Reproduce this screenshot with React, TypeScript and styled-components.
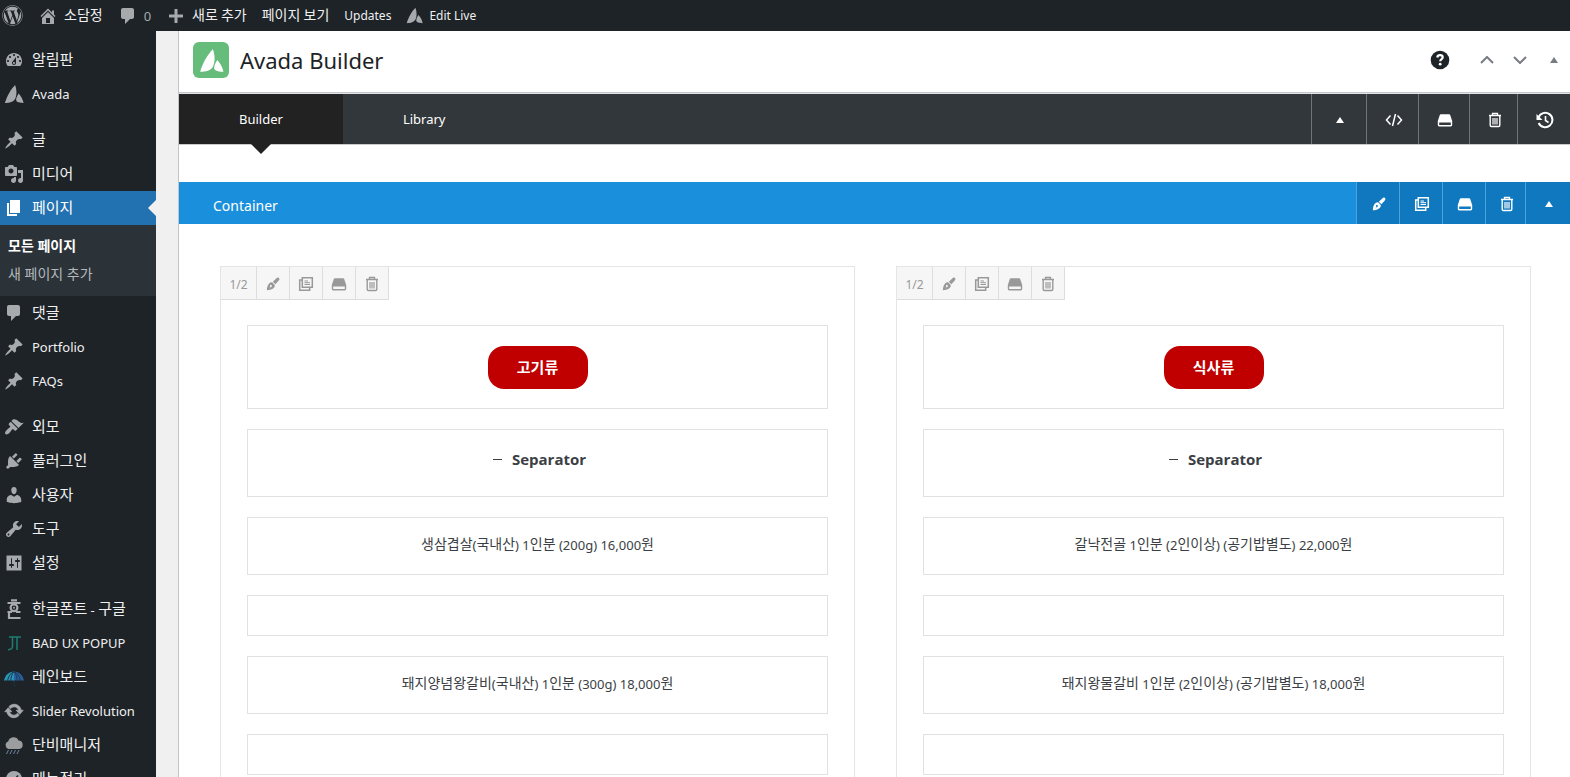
import React from "react";
import styled, { createGlobalStyle, css } from "styled-components";
import { FaWordpress } from "react-icons/fa";

const GlobalStyle = createGlobalStyle`
  *, *::before, *::after { box-sizing: border-box; }
  body {
    margin: 0;
    background: #f0f0f1;
    font-family: "Noto Sans", "Noto Sans CJK KR", sans-serif;
    font-size: 13px;
    color: #3c434a;
  }
  a { color: inherit; text-decoration: none; }
  button {
    margin: 0;
    padding: 0;
    border: 0;
    background: none;
    color: inherit;
    font: inherit;
    cursor: pointer;
  }
  ul { margin: 0; padding: 0; list-style: none; }
`;

/* ---------- Text ---------- */

const HangulRun = styled.span<{ $size: number }>`
  font-family: "Noto Sans CJK KR", sans-serif;
  font-size: ${(p) => p.$size}px;
  line-height: 1;
  vertical-align: 1px;
`;

/* Hangul is set slightly larger than the Latin text around it. */
function Mixed({ text, hangul }: { text: string; hangul: number }) {
  return (
    <span>
      {text.split(/([\uAC00-\uD7A3]+)/).map((run, i) =>
        i % 2 ? (
          <HangulRun key={i} $size={hangul}>
            {run}
          </HangulRun>
        ) : (
          run
        ),
      )}
    </span>
  );
}

/* ---------- Icons ---------- */

const dash = {
  home: "M16 8.5l1.53 1.53-1.06 1.06L10 4.6l-6.47 6.49-1.06-1.06L10 2.5l4 4v-2h2v4zm-6-2.46l6 5.99V18H4v-5.97zM12 17v-5H8v5h4z",
  comments: "M5 2h9c1.1 0 2 .9 2 2v7c0 1.1-.9 2-2 2h-2l-5 5v-5H5c-1.1 0-2-.9-2-2V4c0-1.1.9-2 2-2z",
  plus: "M17 8.5v3h-5.5V17h-3v-5.500H3v-3h5.500V3h3v5.500z",
  dashboard:
    "M3.76 16h12.48c1.1-1.37 1.76-3.11 1.76-5 0-4.42-3.58-8-8-8s-8 3.58-8 8c0 1.89.66 3.63 1.76 5zM10 4c.55 0 1 .45 1 1s-.45 1-1 1-1-.45-1-1 .45-1 1-1zM6 6c.55 0 1 .45 1 1s-.45 1-1 1-1-.45-1-1 .45-1 1-1zm8 0c.55 0 1 .45 1 1s-.45 1-1 1-1-.45-1-1 .45-1 1-1zm-5.37 5.55L12 7v6c0 1.1-.9 2-2 2s-2-.9-2-2c0-.57.24-1.08.63-1.45zM4 10c.55 0 1 .45 1 1s-.45 1-1 1-1-.45-1-1 .45-1 1-1zm12 0c.55 0 1 .45 1 1s-.45 1-1 1-1-.45-1-1 .45-1 1-1zm-5 3c0-.55-.45-1-1-1s-1 .45-1 1 .45 1 1 1 1-.45 1-1z",
  avada:
    "M11.100 1C7 5 3 12 .9 19c4.600 0 8.600-1 10.400-4.500C12.800 11.500 13 6 11.100 1zM14.600 9.500C13.800 11 12.300 13 12.100 15.500c0 2 1.500 3.200 7.500 3.500C18.800 15.200 17 12 14.600 9.500z",
  pin: "M10.44 3.02l1.82-1.82 6.36 6.35-1.83 1.82c-1.05-.68-2.48-.57-3.41.36l-.75.75c-.92.93-1.04 2.35-.35 3.41l-1.83 1.82-2.41-2.41-2.8 2.79c-.42.42-3.38 2.71-3.8 2.29s1.86-3.39 2.28-3.81l2.79-2.79L4.1 9.36l1.83-1.82c1.05.69 2.48.57 3.4-.36l.75-.75c.93-.92 1.05-2.35.36-3.41z",
  media:
    "M13 11V4c0-.55-.45-1-1-1h-1.67L9 1H5L3.67 3H2c-.55 0-1 .45-1 1v7c0 .55.45 1 1 1h10c.55 0 1-.45 1-1zM7 4.5c1.38 0 2.5 1.12 2.5 2.5S8.38 9.5 7 9.5 4.5 8.38 4.5 7 5.62 4.5 7 4.5zM14 6h5v10.5c0 1.38-1.12 2.5-2.5 2.5S14 17.88 14 16.5s1.12-2.5 2.5-2.5c.17 0 .34.02.5.05V9h-3V6zm-4 8.05V13h2v3.5c0 1.38-1.12 2.5-2.5 2.5S7 17.88 7 16.5 8.12 14 9.5 14c.17 0 .34.02.5.05z",
  page: "M6 15V2h10v13H6zm-1 1h8v2H3V5h2v11z",
  brush:
    "M14.48 11.06L7.41 3.99l1.5-1.5c.5-.56 2.3-.47 3.51.32 1.21.8 1.43 1.28 2.91 2.1 1.18.64 2.45 1.26 4.45.85zm-.71.71L6.7 4.7 4.93 6.47c-.39.39-.39 1.02 0 1.41l1.06 1.06c.39.39.39 1.03 0 1.42-.6.6-1.43 1.11-2.21 1.69-.35.26-.7.53-1.01.84C1.43 14.23.4 16.08 1.4 17.07c.99 1 2.84-.03 4.18-1.36.31-.31.58-.66.85-1.02.57-.78 1.08-1.61 1.69-2.21.39-.39 1.02-.39 1.41 0l1.06 1.06c.39.39 1.02.39 1.41 0z",
  plug: "M13.11 4.36L9.87 7.6 8 5.73l3.24-3.24c.35-.34 1.05-.2 1.56.32.52.51.66 1.21.31 1.55zm-8 1.77l.91-1.12 9.01 9.01-1.19.84c-.71.71-2.63 1.16-3.82 1.16H6.14L4.9 17.26c-.59.59-1.54.59-2.12 0-.59-.58-.59-1.53 0-2.12l1.24-1.24v-3.88c0-1.13.4-3.19 1.09-3.89zm7.26 3.97l3.24-3.24c.34-.35 1.04-.21 1.55.31.52.51.66 1.21.31 1.55l-3.24 3.25z",
  user: "M10 9.25c-2.27 0-2.73-3.44-2.73-3.44C7 4.02 7.82 2 9.97 2c2.16 0 2.98 2.02 2.71 3.81 0 0-.41 3.44-2.68 3.44zm0 2.57L12.72 10c2.39 0 4.52 2.33 4.52 4.53v2.49s-3.65 1.13-7.24 1.13c-3.65 0-7.24-1.13-7.24-1.13v-2.49c0-2.25 1.94-4.48 4.47-4.48z",
  wrench:
    "M16.68 9.77c-1.34 1.34-3.3 1.67-4.95.99l-5.41 6.52c-.99.99-2.59.99-3.58 0s-.99-2.59 0-3.57l6.52-5.42c-.68-1.65-.35-3.61.99-4.95 1.28-1.28 3.12-1.62 4.72-1.06l-2.89 2.89 2.82 2.82 2.86-2.87c.53 1.58.18 3.39-1.08 4.65zM3.81 16.21c.4.39 1.04.39 1.43 0 .4-.4.4-1.04 0-1.43-.39-.4-1.03-.4-1.43 0-.39.39-.39 1.03 0 1.43z",
  settings:
    "M17.500 2.500v15h-15v-15zM8 11h1c.55 0 1 .45 1 1s-.45 1-1 1H8v1.500c0 .28-.22.5-.5.5s-.5-.22-.5-.5V13H6c-.55 0-1-.45-1-1s.45-1 1-1h1V5.500c0-.28.22-.5.5-.5s.5.22.5.5V11zm5-2h-1c-.55 0-1-.45-1-1s.45-1 1-1h1V5.500c0-.28.22-.5.5-.5s.5.22.5.5V7h1c.55 0 1 .45 1 1s-.45 1-1 1h-1v5.500c0 .28-.22.5-.5.5s-.5-.22-.5-.5V9z",
  update:
    "M10.2 3.28c3.53 0 6.43 2.61 6.92 6h2.08l-3.5 4-3.5-4h2.32c-.45-1.97-2.21-3.45-4.32-3.45-1.45 0-2.73.71-3.54 1.78L4.95 5.66C6.23 4.2 8.11 3.28 10.2 3.28zm-.4 13.44c-3.52 0-6.43-2.61-6.92-6H.8l3.5-4c1.170 1.33 2.33 2.670 3.5 4H5.48c.45 1.970 2.210 3.450 4.320 3.450 1.450 0 2.730-.71 3.540-1.780l1.710 1.950c-1.280 1.460-3.150 2.380-5.250 2.380z",
};

function Dash({ name, size = 20, bold }: { name: keyof typeof dash; size?: number; bold?: boolean }) {
  return (
    <svg
      width={size}
      height={size}
      viewBox="0 0 20 20"
      fill="currentColor"
      fillRule="evenodd"
      stroke={bold ? "currentColor" : "none"}
      strokeWidth="0.800"
      aria-hidden="true"
    >
      <path d={dash[name]} />
    </svg>
  );
}

const HangulFontIcon = () => (
  <svg width="20" height="20" viewBox="0 0 20 20" fill="none" stroke="currentColor" strokeWidth="2.200" aria-hidden="true">
    <path d="M7 1.300h6M3.500 4h13" />
    <circle cx="10" cy="8.800" r="3.400" />
    <circle cx="10" cy="8.800" r="1" fill="currentColor" stroke="none" />
    <path d="M3.500 13h4.500M12 13h4.500M5 13v6h11.500" />
  </svg>
);

const JtIcon = () => (
  <svg width="20" height="20" viewBox="0 0 20 20" fill="none" stroke="#1c7f72" strokeWidth="1.500" aria-hidden="true">
    <path d="M5 4h12M8.500 4v9.500c0 2-1.500 3-4.500 3.200M13 4v13" />
  </svg>
);

const UmbrellaIcon = () => (
  <svg width="20" height="20" viewBox="0 0 20 20" aria-hidden="true">
    <path d="M0 14C1 8 5 4.500 10 4.500V14c-1-1-2.200-1-3.200 0-1-1-2.300-1-3.300 0-1-1-2.500-1-3.500 0z" fill="#2b93b4" />
    <path d="M10 4.500c5 0 9 3.500 10 9.500-1-1-2.500-1-3.500 0-1-1-2.300-1-3.300 0-1-1-2.200-1-3.200 0z" fill="#2a5f9e" />
    <path d="M3.500 14c.5-4 3-8 6.500-9.500C8 7 6.800 10 6.800 14M16.500 14c-.5-4-3-8-6.500-9.500 2 2.500 3.200 5.500 3.200 9.500" fill="none" stroke="#1a3b52" />
    <path d="M10 14v4c0 1.500 2 1.500 2 0" fill="none" stroke="#20313f" />
  </svg>
);

const RainIcon = () => (
  <svg width="20" height="20" viewBox="0 0 20 20" aria-hidden="true">
    <path d="M4.500 14a4 4 0 0 1-.3-7.600A5.500 5.500 0 0 1 14.500 5.500a4.300 4.300 0 0 1 .8 8.500z" fill="#9b9d9e" />
    <path d="M4.500 15l-2 4M8 15l-2 4M11.500 15l-2 4M15 15l-2 4" stroke="#6f86a3" />
  </svg>
);

const RoundIcon = () => (
  <svg width="20" height="20" viewBox="0 0 20 20" aria-hidden="true">
    <circle cx="10" cy="10" r="8" fill="#a7aaad" />
    <path d="M10 11l4-4.500" stroke="#1d2327" strokeWidth="1.500" />
  </svg>
);

const PenIcon = () => (
  <svg width="14" height="14" viewBox="0 0 16 16" fill="currentColor" fillRule="evenodd" aria-hidden="true">
    <path d="M14.800 1.200c1 1 .6 2-.4 3.100L10.700 8.200 7.800 5.300l3.900-3.700c1-1 2.100-1.400 3.100-.4zM7 6l3 3c.5 3-2.700 6-9 6 .2-6 3-9.400 6-9zm-.8 3.300a1 1 0 1 0-1 1.700L3.300 13.300l2.400-1.900a1.100 1.100 0 0 0 .5-2.100z" />
  </svg>
);

const CloneIcon = () => (
  <svg width="16" height="16" viewBox="0 0 16 16" fill="none" stroke="currentColor" aria-hidden="true">
    <path d="M4.300 1.700h10v9.600h-10z" strokeWidth="1.500" />
    <path d="M4 4H1.700v10.300h10V12" strokeWidth="1.500" />
    <path d="M6.500 5h3.500M6.500 6.700h5.500M6.500 8.500h5.500" />
  </svg>
);

const DriveIcon = () => (
  <svg width="16" height="16" viewBox="0 0 16 16" aria-hidden="true">
    <path d="M3.800 2.200h8.400c.5 0 .8.200 1 .7l2 6H.8l2-6c.2-.5.500-.7 1-.7z" fill="currentColor" />
    <path d="M1.500 9.800h13v3.200c0 .4-.3.700-.7.700H2.200c-.4 0-.7-.3-.7-.7z" fill="none" stroke="currentColor" strokeWidth="1.400" />
  </svg>
);

const TrashIcon = () => (
  <svg width="16" height="16" viewBox="0 0 16 16" fill="none" stroke="currentColor" aria-hidden="true">
    <path d="M2 3.500h12M5.500 3V1.500h5V3" strokeWidth="1.300" />
    <path d="M3.200 3.500v9.800c0 .7.500 1.200 1.200 1.200h7.200c.7 0 1.200-.5 1.200-1.200V3.500" strokeWidth="1.400" />
    <path d="M6 6v6.500M8 6v6.500M10 6v6.500" strokeWidth="1.200" />
  </svg>
);

const CodeIcon = () => (
  <svg width="18" height="16" viewBox="0 0 18 16" fill="none" stroke="currentColor" strokeWidth="1.500" aria-hidden="true">
    <path d="M5.500 3.500L1.500 8l4 4.500M12.500 3.500l4 4.500-4 4.500M10.500 2l-3 12" />
  </svg>
);

const HistoryIcon = () => (
  <svg width="18" height="18" viewBox="0 0 18 18" fill="none" stroke="currentColor" strokeWidth="2" aria-hidden="true">
    <path d="M2.500 6.500a7.200 7.200 0 1 1 .2 5.500" />
    <path d="M.5 3v6h6z" fill="currentColor" stroke="none" />
    <path d="M9.500 5v4.500l3 2" strokeWidth="1.600" />
  </svg>
);

const UpTriangle = () => (
  <svg width="8" height="8" viewBox="0 0 8 8" fill="currentColor" aria-hidden="true">
    <path d="M4 1l4 6H0z" />
  </svg>
);

const Chevron = ({ up }: { up?: boolean }) => (
  <svg width="14" height="8" viewBox="0 0 14 8" fill="none" stroke="currentColor" strokeWidth="2" aria-hidden="true">
    <path d={up ? "M1 7l6-6 6 6" : "M1 1l6 6 6-6"} />
  </svg>
);

const HelpIcon = () => (
  <svg width="20" height="20" viewBox="0 0 20 20" aria-hidden="true">
    <circle cx="10" cy="10" r="9.300" fill="#1d2327" />
    <path d="M7.300 7.500c.2-1.500 1.200-2.300 2.700-2.300s2.700.9 2.700 2.200c0 1.700-2.500 1.800-2.500 3.900" fill="none" stroke="#fff" strokeWidth="2.200" />
    <circle cx="10.200" cy="14.200" r="1.400" fill="#fff" />
  </svg>
);

/* ---------- Frame ---------- */

const Page = styled.div`
  display: flex;
  flex-direction: column;
  height: 100vh;
`;

const AdminBar = styled.header`
  flex: none;
  display: flex;
  align-items: center;
  gap: 15px;
  height: 31px;
  padding-left: 2px;
  background: #1d2327;
  color: #f0f0f1;
  font-size: 12px;
`;

const BarLink = styled.a<{ $muted?: boolean }>`
  display: flex;
  align-items: center;
  gap: 6px;
  height: 30px;
  white-space: nowrap;
  ${(p) =>
    p.$muted &&
    css`
      color: #a7aaad;
      font-size: 13px;
    `}
  svg { color: #a7aaad; }
`;

const Body = styled.div`
  flex: 1;
  min-height: 0;
  display: flex;
`;

const Sidebar = styled.nav`
  flex: none;
  width: 156px;
  padding-top: 12px;
  overflow-y: auto;
  scrollbar-width: none;
  background: #1d2327;
  color: #f0f0f1;
`;

const MenuItem = styled.li<{ $first?: boolean }>`
  margin-top: ${(p) => (p.$first ? 12 : 0)}px;
`;

const MenuLink = styled.a<{ $active?: boolean }>`
  position: relative;
  display: flex;
  align-items: center;
  gap: 8px;
  height: 34px;
  padding-left: 4px;
  white-space: nowrap;
  svg { flex: none; color: ${(p) => (p.$active ? "#fff" : "#a7aaad")}; }
  ${(p) =>
    p.$active &&
    css`
      background: #2271b1;
      color: #fff;
      &::after {
        content: "";
        position: absolute;
        right: 0;
        top: 9px;
        border: 8px solid transparent;
        border-left-width: 0;
        border-right-color: #f0f0f1;
      }
    `}
`;

const SubMenu = styled.ul`
  padding: 7px 0 8px;
  background: #2c3338;
`;

const SubLink = styled.a<{ $current?: boolean }>`
  display: block;
  padding-left: 8px;
  font-size: 14px;
  line-height: 28px;
  color: ${(p) => (p.$current ? "#fff" : "#b4b9be")};
  font-weight: ${(p) => (p.$current ? 700 : 400)};
`;

const Panel = styled.main`
  flex: 1;
  min-width: 0;
  margin-left: 22px;
  border-left: 1px solid #c3c4c7;
  background: #fff;
  overflow-y: auto;
  scrollbar-width: none;
`;

/* ---------- Builder ---------- */

const PanelHeader = styled.header`
  display: flex;
  align-items: center;
  gap: 11px;
  height: 62px;
  padding: 0 12px 3px 14px;
  border-bottom: 1px solid #c3c4c7;
  color: #1d2327;
`;

const Logo = styled.span`
  display: grid;
  place-items: center;
  width: 36px;
  height: 36px;
  border-radius: 6px;
  background: #65bc7b;
  color: #fff;
`;

const Title = styled.h1`
  flex: 1;
  margin: 0;
  font-size: 22px;
  line-height: 30px;
  font-weight: 400;
`;

const HeaderActions = styled.div`
  display: flex;
  align-items: center;
  gap: 19px;
  color: #787c82;
  button { display: flex; }
  button:first-child { margin-right: 11px; }
  button:last-child { margin-left: 4px; }
`;

const TabBar = styled.div`
  display: flex;
  height: 52px;
  border-top: 1px solid #e2e4e7;
  border-bottom: 1px solid #c8cacc;
  background: #32373c;
  color: #fff;
`;

const Tabs = styled.div`
  flex: 1;
  display: flex;
`;

const Tab = styled.button<{ $active?: boolean }>`
  position: relative;
  padding: 0 60px;
  font-size: 13px;
  ${(p) =>
    p.$active &&
    css`
      background: #222;
      &::after {
        content: "";
        position: absolute;
        left: 50%;
        top: 100%;
        margin-left: -10px;
        border: 10px solid transparent;
        border-bottom-width: 0;
        border-top-color: #222;
      }
    `}
`;

const Tool = styled.button<{ $width: number; $line: string; $bg?: string }>`
  display: flex;
  align-items: center;
  justify-content: center;
  width: ${(p) => p.$width}px;
  padding: 2px 0 0 2px;
  border-left: 1px solid ${(p) => p.$line};
  background: ${(p) => p.$bg ?? "transparent"};
`;

const ContainerBar = styled.div`
  display: flex;
  height: 42px;
  margin-top: 37px;
  background: #1a8fdb;
  color: #fff;
`;

const ContainerName = styled.h2`
  flex: 1;
  margin: 0;
  padding: 4px 34px 0;
  font-size: 14px;
  line-height: 40px;
  font-weight: 400;
`;

const Columns = styled.div`
  display: flex;
  gap: 41px;
  padding: 42px 39px 42px 41px;
`;

const Column = styled.section`
  flex: 1;
  min-width: 0;
  border: 1px solid #e5e5e5;
`;

const ColumnTools = styled.div`
  display: flex;
  height: 33px;
  color: #999;
`;

const ColumnTool = styled.button<{ $wide?: boolean }>`
  display: flex;
  align-items: center;
  justify-content: center;
  width: ${(p) => (p.$wide ? 36 : 33)}px;
  padding-top: 2px;
  border: solid #ddd;
  border-width: 0 1px 1px 0;
  background: #f6f6f6;
  font-size: 12px;
`;

const Elements = styled.div`
  display: flex;
  flex-direction: column;
  gap: 20px;
  padding: 25px 26px;
`;

const Element = styled.div<{ $height: number }>`
  display: flex;
  align-items: center;
  justify-content: center;
  min-height: ${(p) => p.$height}px;
  border: 1px solid #e0e1e2;
  color: #3b3f45;
`;

const TextPreview = styled.div`
  padding-bottom: 2px;
`;

const PreviewButton = styled.a`
  min-width: 100px;
  padding: 0 24px;
  border-radius: 16px;
  background: #c00000;
  color: #fff;
  font-size: 15px;
  font-weight: 700;
  line-height: 43px;
  text-align: center;
`;

const SeparatorLabel = styled.h3`
  display: flex;
  align-items: center;
  gap: 10px;
  margin: 0;
  padding: 0 0 8px 4px;
  font-family: "Open Sans", sans-serif;
  font-size: 15px;
  line-height: 20px;
  font-weight: 700;
  &::before {
    content: "";
    width: 9px;
    height: 1px;
    background: #3b3f45;
  }
`;

/* ---------- Data ---------- */

type Item = { label: string; icon: React.ReactNode; first?: boolean; active?: boolean; sub?: string[] };

const menu: Item[] = [
  { label: "알림판", icon: <Dash name="dashboard" /> },
  { label: "Avada", icon: <Dash name="avada" /> },
  { label: "글", icon: <Dash name="pin" />, first: true },
  { label: "미디어", icon: <Dash name="media" /> },
  { label: "페이지", icon: <Dash name="page" />, active: true, sub: ["모든 페이지", "새 페이지 추가"] },
  { label: "댓글", icon: <Dash name="comments" /> },
  { label: "Portfolio", icon: <Dash name="pin" /> },
  { label: "FAQs", icon: <Dash name="pin" /> },
  { label: "외모", icon: <Dash name="brush" />, first: true },
  { label: "플러그인", icon: <Dash name="plug" /> },
  { label: "사용자", icon: <Dash name="user" /> },
  { label: "도구", icon: <Dash name="wrench" /> },
  { label: "설정", icon: <Dash name="settings" /> },
  { label: "한글폰트 - 구글", icon: <HangulFontIcon />, first: true },
  { label: "BAD UX POPUP", icon: <JtIcon /> },
  { label: "레인보드", icon: <UmbrellaIcon /> },
  { label: "Slider Revolution", icon: <Dash name="update" bold /> },
  { label: "단비매니저", icon: <RainIcon /> },
  { label: "메뉴정리", icon: <RoundIcon /> },
];

const columns = [
  { name: "고기류", rows: ["생삼겹살(국내산) 1인분 (200g) 16,000원", "돼지양념왕갈비(국내산) 1인분 (300g) 18,000원"] },
  { name: "식사류", rows: ["갈낙전골 1인분 (2인이상) (공기밥별도) 22,000원", "돼지왕물갈비 1인분 (2인이상) (공기밥별도) 18,000원"] },
];

const tabTools = [
  { label: "Toggle all", icon: <UpTriangle />, width: 55 },
  { label: "Custom CSS", icon: <CodeIcon />, width: 52 },
  { label: "Save page", icon: <DriveIcon />, width: 51 },
  { label: "Delete all", icon: <TrashIcon />, width: 48 },
  { label: "History", icon: <HistoryIcon />, width: 53 },
];

const containerTools = [
  { label: "Edit container", icon: <PenIcon />, width: 43 },
  { label: "Clone container", icon: <CloneIcon />, width: 43 },
  { label: "Save container", icon: <DriveIcon />, width: 43 },
  { label: "Delete container", icon: <TrashIcon />, width: 40 },
  { label: "Toggle container", icon: <UpTriangle />, width: 45 },
];

const columnTools = [
  { label: "Edit column", icon: <PenIcon /> },
  { label: "Clone column", icon: <CloneIcon /> },
  { label: "Save column", icon: <DriveIcon /> },
  { label: "Delete column", icon: <TrashIcon /> },
];

export default function App() {
  return (
    <Page>
      <GlobalStyle />
      <AdminBar>
        <BarLink href="#" aria-label="WordPress">
          <FaWordpress size={21} />
        </BarLink>
        <BarLink href="#">
          <Dash name="home" />
          <Mixed text="소담정" hangul={14} />
        </BarLink>
        <BarLink href="#" $muted>
          <Dash name="comments" />
          <span>0</span>
        </BarLink>
        <BarLink href="#">
          <Dash name="plus" />
          <Mixed text="새로 추가" hangul={14} />
        </BarLink>
        <BarLink href="#">
          <Mixed text="페이지 보기" hangul={14} />
        </BarLink>
        <BarLink href="#">Updates</BarLink>
        <BarLink href="#">
          <Dash name="avada" size={17} />
          <span>Edit Live</span>
        </BarLink>
      </AdminBar>
      <Body>
        <Sidebar>
          <ul>
            {menu.map((item) => (
              <MenuItem key={item.label} $first={item.first}>
                <MenuLink href="#" $active={item.active}>
                  {item.icon}
                  <Mixed text={item.label} hangul={15} />
                </MenuLink>
                {item.sub && (
                  <SubMenu>
                    {item.sub.map((s, i) => (
                      <li key={s}>
                        <SubLink href="#" $current={i === 0}>
                          {s}
                        </SubLink>
                      </li>
                    ))}
                  </SubMenu>
                )}
              </MenuItem>
            ))}
          </ul>
        </Sidebar>
        <Panel>
          <PanelHeader>
            <Logo>
              <Dash name="avada" size={25} />
            </Logo>
            <Title>Avada Builder</Title>
            <HeaderActions>
              <button aria-label="Help"><HelpIcon /></button>
              <button aria-label="Move up"><Chevron up /></button>
              <button aria-label="Move down"><Chevron /></button>
              <button aria-label="Toggle panel"><UpTriangle /></button>
            </HeaderActions>
          </PanelHeader>
          <TabBar>
            <Tabs>
              <Tab $active>Builder</Tab>
              <Tab>Library</Tab>
            </Tabs>
            {tabTools.map((t) => (
              <Tool key={t.label} aria-label={t.label} $width={t.width} $line="#707478">
                {t.icon}
              </Tool>
            ))}
          </TabBar>
          <ContainerBar>
            <ContainerName>Container</ContainerName>
            {containerTools.map((t) => (
              <Tool key={t.label} aria-label={t.label} $width={t.width} $line="#4ba3dc" $bg="#0f78be">
                {t.icon}
              </Tool>
            ))}
          </ContainerBar>
          <Columns>
            {columns.map((c) => (
              <Column key={c.name}>
                <ColumnTools>
                  <ColumnTool $wide>1/2</ColumnTool>
                  {columnTools.map((t) => (
                    <ColumnTool key={t.label} aria-label={t.label}>
                      {t.icon}
                    </ColumnTool>
                  ))}
                </ColumnTools>
                <Elements>
                  <Element $height={84}>
                    <PreviewButton href="#">{c.name}</PreviewButton>
                  </Element>
                  <Element $height={68}>
                    <SeparatorLabel>Separator</SeparatorLabel>
                  </Element>
                  {c.rows.map((r) => (
                    <React.Fragment key={r}>
                      <Element $height={58}>
                        <TextPreview>
                          <Mixed text={r} hangul={14} />
                        </TextPreview>
                      </Element>
                      <Element $height={41} />
                    </React.Fragment>
                  ))}
                </Elements>
              </Column>
            ))}
          </Columns>
        </Panel>
      </Body>
    </Page>
  );
}
